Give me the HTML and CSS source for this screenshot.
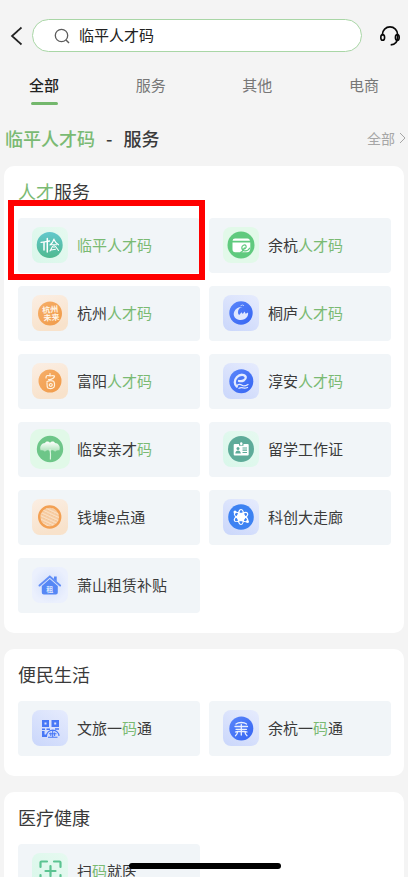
FILE: index.html
```html
<!DOCTYPE html>
<html lang="zh-CN">
<head>
<meta charset="utf-8">
<meta name="viewport" content="width=device-width, initial-scale=1">
<title>临平人才码</title>
<link rel="stylesheet" href="styles.css">
</head>
<body>
<svg class="defs" width="0" height="0" aria-hidden="true">
  <defs>
    <linearGradient id="bgGreen" x1="1" y1="0" x2="0" y2="1"><stop offset="0" stop-color="#e6f9f0"/><stop offset="1" stop-color="#d9f7ea"/></linearGradient>
    <linearGradient id="bgOrange" x1="0" y1="0" x2="0.3" y2="1"><stop offset="0" stop-color="#fbeee3"/><stop offset="1" stop-color="#f8e2cb"/></linearGradient>
    <linearGradient id="bgBlue" x1="0.8" y1="0" x2="0.2" y2="1"><stop offset="0" stop-color="#e4eafd"/><stop offset="1" stop-color="#ccd8fb"/></linearGradient>
    <linearGradient id="teal" x1="0" y1="0" x2="0" y2="1"><stop offset="0" stop-color="#62c8cc"/><stop offset="1" stop-color="#50b98f"/></linearGradient>
    <linearGradient id="orange" x1="0" y1="0" x2="1" y2="1"><stop offset="0" stop-color="#f6ae68"/><stop offset="1" stop-color="#f09a48"/></linearGradient>
    <linearGradient id="blue" x1="0" y1="0" x2="1" y2="1"><stop offset="0" stop-color="#5a85fa"/><stop offset="1" stop-color="#3565f3"/></linearGradient>
    <linearGradient id="leaf" x1="0" y1="0" x2="0" y2="1"><stop offset="0" stop-color="#fff"/><stop offset="1" stop-color="#a9e1b7"/></linearGradient>
    <radialGradient id="haze"><stop offset="0" stop-color="#d3dffc"/><stop offset="1" stop-color="#ebf0fd"/></radialGradient>
    <pattern id="weave" width="3" height="3" patternUnits="userSpaceOnUse" patternTransform="rotate(25)"><rect width="3" height="3" fill="#fae0c4"/><path d="M0 1H3M1 0V1" stroke="#f1b57b" stroke-width=".8"/></pattern>
  </defs>
</svg>
<div class="app">
  <header class="topbar">
    <button class="icon-button" type="button" aria-label="返回">
      <svg width="14" height="20" viewBox="0 0 14 20"><path d="M11.500 1.500 2 10l9.500 8.500" fill="none" stroke="#222" stroke-width="1.700"/></svg>
    </button>
    <form class="search" role="search">
      <svg width="16" height="16" viewBox="0 0 16 16"><circle cx="7.500" cy="7.500" r="6.200" fill="none" stroke="#5c5c5c" stroke-width="1.300"/><path d="m12 12 3 3" stroke="#5c5c5c" stroke-width="1.400"/></svg>
      <input class="search-input" type="text" value="临平人才码" aria-label="搜索">
    </form>
    <button class="icon-button" type="button" aria-label="客服">
      <svg width="20" height="20" viewBox="0 0 20 20" fill="none" stroke="#080808" stroke-width="1.600"><path d="M2.400 9.500V8.500a7.600 7.600 0 0 1 15.200 0V11c0 4.500-2.600 7.600-6.900 7.900"/><ellipse cx="2.700" cy="11.400" rx="1.900" ry="2.800"/><ellipse cx="17.300" cy="11.400" rx="1.900" ry="2.800"/></svg>
    </button>
  </header>

  <nav class="tabs">
    <a class="tab active" href="#all">全部</a>
    <a class="tab" href="#service">服务</a>
    <a class="tab" href="#other">其他</a>
    <a class="tab" href="#shop">电商</a>
  </nav>

  <main class="content">
    <div class="section-head">
      <h1 class="section-title"><em>临平人才码</em><span class="dash">-</span>服务</h1>
      <a class="more" href="#all">全部<svg width="7" height="12" viewBox="0 0 7 12"><path d="m1 1 5 5-5 5" fill="none" stroke="#a6a6a6"/></svg></a>
    </div>

    <section class="card">
      <h2 class="card-title"><em>人才</em>服务</h2>
      <div class="grid">
        <a class="tile marked" href="#linping">
          <svg class="tile-icon" viewBox="0 0 36 36"><rect width="36" height="36" rx="8" fill="url(#bgGreen)"/><circle cx="17.700" cy="18" r="13" fill="url(#teal)"/><g fill="none" stroke="#fff" stroke-linecap="round"><path d="M9 15.300c3 0 5.500-1 8.500-1.300" stroke-width="1.300"/><path d="M12 15.500v7.500M15.300 11.500V25" stroke-width="1.500"/><path d="M22 12c-.8 3-2.200 4.500-4 6M22 12.500c1 2.500 2.300 4 4.500 5.300M19.500 17.700h5M22 18v2.500M20.500 19.500 18 24M23.500 19.500l3 4M19 23l4.500-.8" stroke-width="1.100"/></g></svg>
          <span><em>临平人才码</em></span>
        </a>
        <a class="tile" href="#yuhang">
          <svg class="tile-icon" viewBox="0 0 36 36"><rect width="36" height="36" rx="8" fill="#e2f9e9"/><circle cx="18" cy="18" r="13.500" fill="#60ca7e"/><path d="M9.500 13.800q.3-2.300 2.500-2.300h12.500q2 0 2.500 2.300z" fill="#fff"/><path d="M9.500 15.500h17.800v6q0 3.700-3.300 3.700H12.200q-2.700 0-2.700-3z" fill="#fff"/><path d="M18.500 21.800c3 1 5.500-1 4.500-3-1.200-1.800-4.200-.2-4.200 2 0 4 5.800 4.200 8.200 0M17 25.500c2 0 3.500-2.500 4.600-5" fill="none" stroke="#60ca7e" stroke-width="1.200"/></svg>
          <span>余杭<em>人才码</em></span>
        </a>
        <a class="tile" href="#hangzhou">
          <svg class="tile-icon" viewBox="0 0 36 36"><rect width="36" height="36" rx="8" fill="url(#bgOrange)"/><circle cx="18" cy="18.500" r="12" fill="url(#orange)"/><g class="seal seal-small" transform="rotate(-5 18 18)"><text x="10.500" y="17.500">杭州</text><text x="11" y="25.500">未来</text></g></svg>
          <span>杭州<em>人才码</em></span>
        </a>
        <a class="tile" href="#tonglu">
          <svg class="tile-icon" viewBox="0 0 36 36"><rect width="36" height="36" rx="8" fill="url(#bgBlue)"/><circle cx="18" cy="18" r="11.700" fill="url(#blue)"/><path d="M19.500 12c-3 .3-4.500 2.500-4.500 5 0 1.500.5 2.500 1.200 3l2.300-2.700 1.300 1.700 1.700-2.500 1.200 2.300 2.300-1.300c.3 1.500 0 3-.8 4.200-2 2.800-5.500 3.800-8.700 3-4-1-5.700-4.700-4.300-8 1.200-3 4.300-5 8.300-4.700z" fill="#dfe8ff"/><path d="m17.500 10.800 2-.8 1.500.8" stroke="#b9ccff" fill="none"/></svg>
          <span>桐庐<em>人才码</em></span>
        </a>
        <a class="tile" href="#fuyang">
          <svg class="tile-icon" viewBox="0 0 36 36"><rect width="36" height="36" rx="8" fill="url(#bgOrange)"/><circle cx="18" cy="18" r="11.500" fill="url(#orange)"/><g fill="none" stroke="#fff2df" stroke-linecap="round" stroke-width="1.200"><path d="M18 10.500v2M14 15c0-2.500 1-2.800 3-2.300s4-.5 5.500.3c0 1-.5 1.500-1 2M16.500 16.500c1.500.2 3-.2 4-1M15 19.500c0 2.500-.2 4.500.8 5.500 2 .8 5 .5 6.200-.8 1-2 .5-5-.5-6-1.800-.8-4.500-.5-6.500.3M18.500 20.500c-2 1-1.300 3 .5 2.800 2-.5 1.500-3-.5-2.800"/></g></svg>
          <span>富阳<em>人才码</em></span>
        </a>
        <a class="tile" href="#chunan">
          <svg class="tile-icon" viewBox="0 0 36 36"><rect width="36" height="36" rx="8" fill="url(#bgBlue)"/><circle cx="18.300" cy="18.300" r="12" fill="url(#blue)"/><g fill="none" stroke="#e3ebff" stroke-linecap="round"><path d="M16 18c3.500.8 7-1.200 6.800-3.800-.5-3.200-6-3.200-8.800-.2-3 3.200-2.800 7.500-.2 9.500" stroke-width="2.300"/><path d="M14 22.500c2-1.700 3.500-1.200 5-.2s3.500.8 6-.8M16 25.300c2-1.300 3-.8 4.500-.3s2.500.2 4-.5" stroke-width="1.300"/></g></svg>
          <span>淳安<em>人才码</em></span>
        </a>
        <a class="tile" href="#linan">
          <svg class="tile-icon" viewBox="0 0 36 36"><rect x="-2" y="-2" width="40" height="40" rx="10" fill="#e1f9e8"/><circle cx="18" cy="18" r="13.200" fill="#6dc688"/><path d="M18 20.500c-2-2-3.500-1-5 .2-1.500-1.200-3-1.700-4.300-1.300-1.700-4 1.300-7.400 4.300-7.400 1-1.600 3.500-2 5-.3 1.500-1.700 4-1.300 5 .3 3 0 6 3.400 4.300 7.400-1.300-.4-2.800.1-4.300 1.300-1.500-1.200-3-2.200-5-.2z" fill="url(#leaf)"/><path d="M18 18c.7 4 .6 7 .4 10.500" stroke="#d9f4df" stroke-width="1.200" fill="none"/></svg>
          <span>临安亲才<em>码</em></span>
        </a>
        <a class="tile" href="#study">
          <svg class="tile-icon" viewBox="0 0 36 36"><rect width="36" height="36" rx="8" fill="url(#bgGreen)"/><circle cx="18" cy="18" r="13" fill="#5eab99"/><rect x="10.700" y="13" width="15" height="11.500" rx="1" fill="#fff"/><path d="M16 12.500h4.500v2.200H16z" fill="#5eab99"/><rect x="17.100" y="11.300" width="2.300" height="3" rx="1" fill="#fff"/><g fill="#5eab99"><circle cx="15" cy="17.500" r="1.500"/><path d="M12.300 22.500c0-4 5.500-4 5.500 0z"/></g><path d="M19.500 17h4.500M19.500 19.200h4.500M19.500 21.500h4.500" stroke="#5eab99" stroke-width="1.200"/></svg>
          <span>留学工作证</span>
        </a>
        <a class="tile" href="#qiantang">
          <svg class="tile-icon" viewBox="0 0 36 36"><rect width="36" height="36" rx="8" fill="url(#bgOrange)"/><circle cx="17.700" cy="18" r="10.500" fill="url(#weave)" stroke="#f3a053" stroke-width="2.400"/></svg>
          <span>钱塘e点通</span>
        </a>
        <a class="tile" href="#corridor">
          <svg class="tile-icon" viewBox="0 0 36 36"><rect width="36" height="36" rx="8" fill="url(#bgBlue)"/><circle cx="18" cy="18" r="12.800" fill="#3d82f2"/><g fill="none" stroke="#fff" stroke-width="1.200"><ellipse cx="18" cy="18" rx="2.800" ry="7.500"/><ellipse cx="18" cy="18" rx="2.800" ry="7.500" transform="rotate(60 18 18)"/><ellipse cx="18" cy="18" rx="2.800" ry="7.500" transform="rotate(120 18 18)"/></g><circle cx="18" cy="18" r="4.200" fill="#fff"/><circle cx="12" cy="13" r="1.500" fill="#fff"/><circle cx="24.500" cy="22.500" r="1.500" fill="#fff"/></svg>
          <span>科创大走廊</span>
        </a>
        <a class="tile" href="#xiaoshan">
          <svg class="tile-icon" viewBox="0 0 36 36"><rect width="36" height="36" rx="8" fill="url(#haze)"/><path d="m7.500 18.500 10.300-9 10.300 9" fill="none" stroke="#638ff6" stroke-width="2" stroke-linecap="round"/><path d="M22 9.500h2.700v5L22 12.300zM17.800 12l8 7v6.500q0 2-2 2h-12q-2 0-2-2V19z" fill="#5687f5"/><g class="seal seal-rent"><text x="14.300" y="24.500">租</text></g></svg>
          <span>萧山租赁补贴</span>
        </a>
      </div>
    </section>

    <section class="card">
      <h2 class="card-title">便民生活</h2>
      <div class="grid">
        <a class="tile" href="#travel">
          <svg class="tile-icon" viewBox="0 0 36 36"><rect width="36" height="36" rx="8" fill="url(#bgBlue)"/><path fill="#4878f6" fill-rule="evenodd" d="M10 10h7v7h-7zm2.500 2.500v2h2v-2zM19.500 10h7.500v7h-7.500zm2.700 2.500v2h2v-2zM10 18.500h3v1.500h-3zM14.500 18.500h3.500v1.500h-3.500zM23 18.200h4v1.500h-4zM10 21h2.500v3.500H15V27h-5z"/><path d="M14.500 26a6 5.600 0 0 1 12.500 0M16 27.200h9.500M17 23.700h7.500M18.800 22.500v3.500M20.700 20.500v6.500M22.600 22.500v3.500" fill="none" stroke="#4878f6" stroke-width="1.100"/></svg>
          <span>文旅一<em>码</em>通</span>
        </a>
        <a class="tile" href="#yuhang-pass">
          <svg class="tile-icon" viewBox="0 0 36 36"><rect width="36" height="36" rx="8" fill="url(#bgBlue)"/><circle cx="18.300" cy="18.500" r="12" fill="url(#blue)"/><g fill="none" stroke="#eaf0ff" stroke-width="1.300" stroke-linecap="round"><path d="M13 14c2.500-2 8-2 10.500 0M12 16.500h12.500M13 19.300h10.500M18.300 14.500V25M12.500 22c2-1 9.500-1 11.500 0M14.500 22c0 1.700-.8 2.700-2 3.700M22 22c0 1.700.8 2.700 2 3.700"/></g></svg>
          <span>余杭一<em>码</em>通</span>
        </a>
      </div>
    </section>

    <section class="card">
      <h2 class="card-title">医疗健康</h2>
      <div class="grid">
        <a class="tile" href="#medical">
          <svg class="tile-icon" viewBox="0 0 36 36"><rect width="36" height="36" rx="8" fill="url(#bgGreen)"/><path d="M8.500 14V9.500q0-1 1-1H15M22 8.500h5.500q1 0 1 1V14M28.500 22v4.500q0 1-1 1H22M15 27.500H9.500q-1 0-1-1V22M18.500 13v10M13.500 18h10" fill="none" stroke="#5bc391" stroke-width="2.200" stroke-linecap="round"/></svg>
          <span>扫<em>码</em>就医</span>
        </a>
      </div>
    </section>
  </main>
  <div class="home-indicator"></div>
</div>
</body>
</html>
```
FILE: styles.css
```css
* { box-sizing: border-box; }

body {
  margin: 0;
  background: #f4f4f4;
  color: #3a3a3a;
  font-family: "Noto Sans CJK SC", "Noto Sans", sans-serif;
  font-size: 15px;
  line-height: 24px;
}

a { color: inherit; text-decoration: none; }
em { color: #7aba73; font-style: normal; }
h1, h2 { margin: 0; font-weight: 400; }
svg { display: block; flex: none; }
.defs { position: absolute; }

.app {
  display: flex;
  flex-direction: column;
  height: 100vh;
  overflow: hidden;
}

.topbar {
  display: flex;
  align-items: center;
  padding: 19px 8px 0 10px;
}

.icon-button {
  padding: 0;
  border: 0;
  background: none;
}

.search {
  display: flex;
  flex: 1;
  align-items: center;
  gap: 9px;
  height: 33px;
  margin: 0 18px 0 8px;
  padding: 0 21px;
  border: 1px solid #a9d6a6;
  border-radius: 17px;
  background: #fff;
}

.search-input {
  flex: 1;
  min-width: 0;
  height: 24px;
  padding: 0 0 2px;
  border: 0;
  outline: 0;
  background: none;
  color: #222;
  font: inherit;
}

.tabs {
  display: flex;
  justify-content: space-between;
  padding: 21px 29px 0;
}

.tab {
  display: flex;
  flex-direction: column;
  align-items: center;
  gap: 5px;
  color: #777;
}

.tab::after {
  width: 27px;
  height: 3px;
  border-radius: 2px;
  content: "";
}

.tab.active { color: #222; font-weight: 500; }
.tab.active::after { background: #73b76c; }

.content {
  flex: 1;
  min-height: 0;
  overflow-y: auto;
  padding: 20px 4px 0;
  scrollbar-width: none;
}

.section-head {
  display: flex;
  align-items: center;
  justify-content: space-between;
  margin-bottom: 15px;
  padding-left: 1px;
}

.section-title {
  font-size: 18px;
  font-weight: 500;
  line-height: 26px;
}

.dash { margin: 0 11px; }

.more {
  display: flex;
  align-items: center;
  gap: 4px;
  margin-right: -2px;
  color: #a6a6a6;
  font-size: 14px;
}

.card {
  margin-bottom: 16px;
  padding: 12px 13px 20px 14px;
  border-radius: 10px;
  background: #fff;
}

.card-title {
  margin-bottom: 14px;
  font-size: 18px;
  line-height: 26px;
}

.grid {
  display: grid;
  grid-template-columns: 1fr 1fr;
  gap: 13px 9px;
}

.tile {
  position: relative;
  display: flex;
  align-items: center;
  gap: 9px;
  height: 55px;
  padding: 0 0 1px 14px;
  border-radius: 4px;
  background: #f1f5f8;
}

.tile-icon {
  width: 36px;
  height: 36px;
  overflow: visible;
}

.marked::after {
  position: absolute;
  inset: -18px -5px -7px -10px;
  border: 6px solid #f00;
  content: "";
}

.seal { fill: #fff4e6; font-weight: 700; }
.seal-small { font-size: 8px; }
.seal-rent { fill: #dce8ff; font-size: 7px; }

.home-indicator {
  position: fixed;
  bottom: 8px;
  left: 50%;
  width: 152px;
  height: 6px;
  margin-left: -75px;
  border-radius: 3px;
  background: #000;
}
```
